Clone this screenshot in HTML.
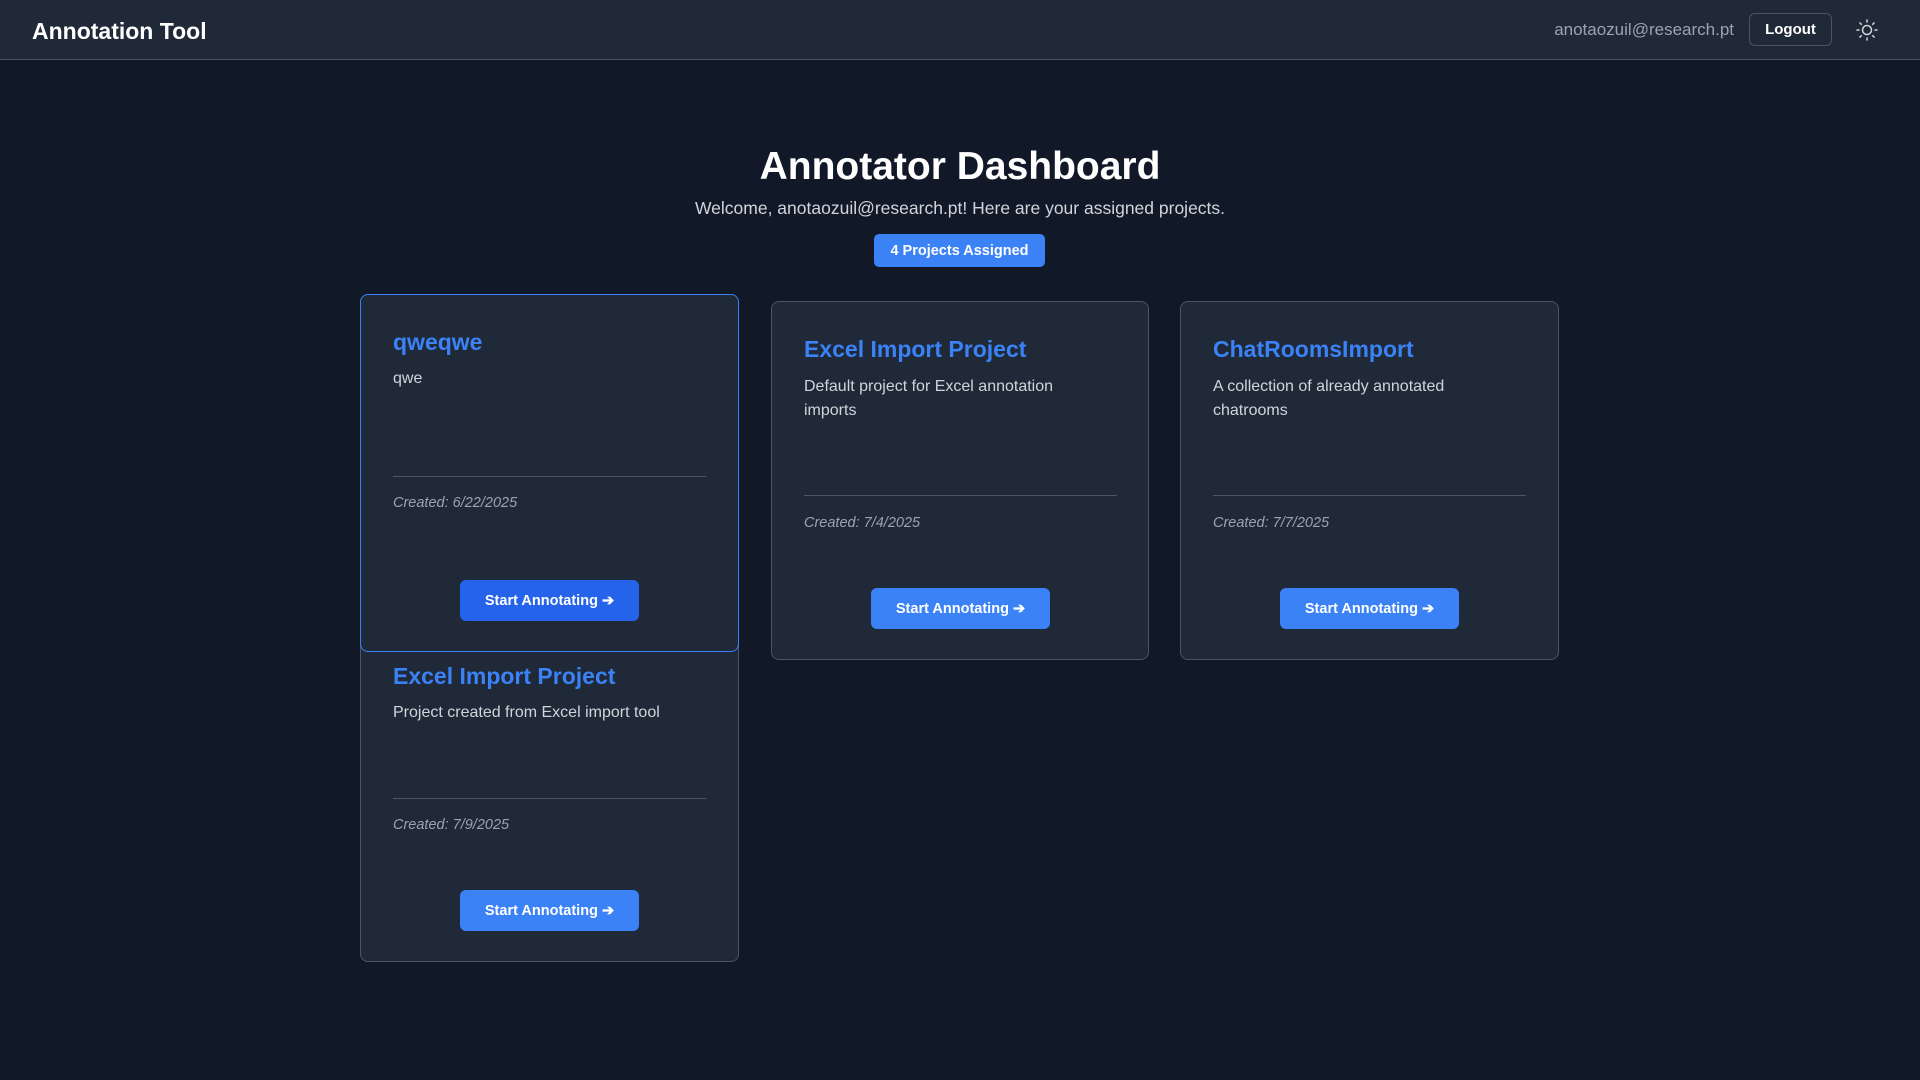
<!DOCTYPE html>
<html><head><meta charset="utf-8"><style>
*{margin:0;padding:0;box-sizing:border-box}
body{width:1920px;height:1080px;background:#111827;font-family:"Liberation Sans",sans-serif;position:relative;overflow:hidden;color:#fff}
.hdr{position:absolute;left:0;top:0;width:1920px;height:60px;background:#1f2937;border-bottom:1px solid #4b5563}
.a{position:absolute;white-space:nowrap}
.card{position:absolute;background:#1f2937;border:1px solid #4b5563;border-radius:8px}
.t{position:absolute;left:32px;font-size:23px;font-weight:bold;color:#3b82f6;line-height:30px}
.d{position:absolute;left:32px;font-size:16px;color:#d1d5db;line-height:24px}
.hr{position:absolute;left:32px;width:313px;height:1px;background:#4b5563}
.c{position:absolute;left:32px;font-size:14.5px;font-style:italic;color:#9ca3af;line-height:20px}
.b{position:absolute;left:99px;width:179px;height:41px;border-radius:6px;background:#3b82f6;color:#fff;font-weight:bold;font-size:14.5px;text-align:center;line-height:43px}
</style></head><body>
<div class="hdr"></div>
<div class="a" style="left:32px;top:16px;font-size:23px;font-weight:bold;line-height:30px">Annotation Tool</div>
<div class="a" style="right:186px;top:19px;font-size:17px;color:#9ca3af;line-height:22px">anotaozuil@research.pt</div>
<div class="a" style="left:1749px;top:13px;width:83px;height:33px;border:1px solid #4b5563;border-radius:6px;font-size:15px;font-weight:bold;text-align:center;line-height:31px">Logout</div>
<svg class="a" style="left:1855px;top:18px" width="24" height="24" viewBox="0 0 24 24" fill="none" stroke="#d1d5db" stroke-width="1.5" stroke-linecap="round"><circle cx="12" cy="12" r="4.5"/><path d="M12 2v2M12 20v2M2 12h2M20 12h2M4.9 4.9l1.4 1.4M17.7 17.7l1.4 1.4M4.9 19.1l1.4-1.4M17.7 6.3l1.4-1.4"/></svg>

<div class="a" style="left:0;width:1920px;text-align:center;top:143px;font-size:39px;font-weight:bold;line-height:48px">Annotator Dashboard</div>
<div class="a" style="left:0;width:1920px;text-align:center;top:197px;font-size:17.5px;color:#d1d5db;line-height:22px">Welcome, anotaozuil@research.pt! Here are your assigned projects.</div>
<div class="a" style="left:874px;top:234px;width:171px;height:33px;background:#3b82f6;border-radius:5px;font-size:14.5px;font-weight:bold;text-align:center;line-height:35px">4 Projects Assigned</div>

<div class="card" style="left:360px;top:628px;width:379px;height:334px">
<div class="t" style="top:32px">Excel Import Project</div>
<div class="d" style="top:72px">Project created from Excel import tool</div>
<div class="hr" style="top:169px"></div>
<div class="c" style="top:186px">Created: 7/9/2025</div>
<div class="b" style="top:261px">Start Annotating ➔</div>
</div>

<div class="card" style="left:360px;top:294px;width:379px;height:358px;border-color:#3b82f6;z-index:2">
<div class="t" style="top:32px">qweqwe</div>
<div class="d" style="top:72px">qwe</div>
<div class="hr" style="top:181px"></div>
<div class="c" style="top:198px">Created: 6/22/2025</div>
<div class="b" style="top:285px;background:#2563eb">Start Annotating ➔</div>
</div>

<div class="card" style="left:771px;top:301px;width:378px;height:359px">
<div class="t" style="top:32px">Excel Import Project</div>
<div class="d" style="top:73px">Default project for Excel annotation<br>imports</div>
<div class="hr" style="top:193px"></div>
<div class="c" style="top:211px">Created: 7/4/2025</div>
<div class="b" style="top:286px">Start Annotating ➔</div>
</div>

<div class="card" style="left:1180px;top:301px;width:379px;height:359px">
<div class="t" style="top:32px">ChatRoomsImport</div>
<div class="d" style="top:73px">A collection of already annotated<br>chatrooms</div>
<div class="hr" style="top:193px"></div>
<div class="c" style="top:211px">Created: 7/7/2025</div>
<div class="b" style="top:286px">Start Annotating ➔</div>
</div>
</body></html>
